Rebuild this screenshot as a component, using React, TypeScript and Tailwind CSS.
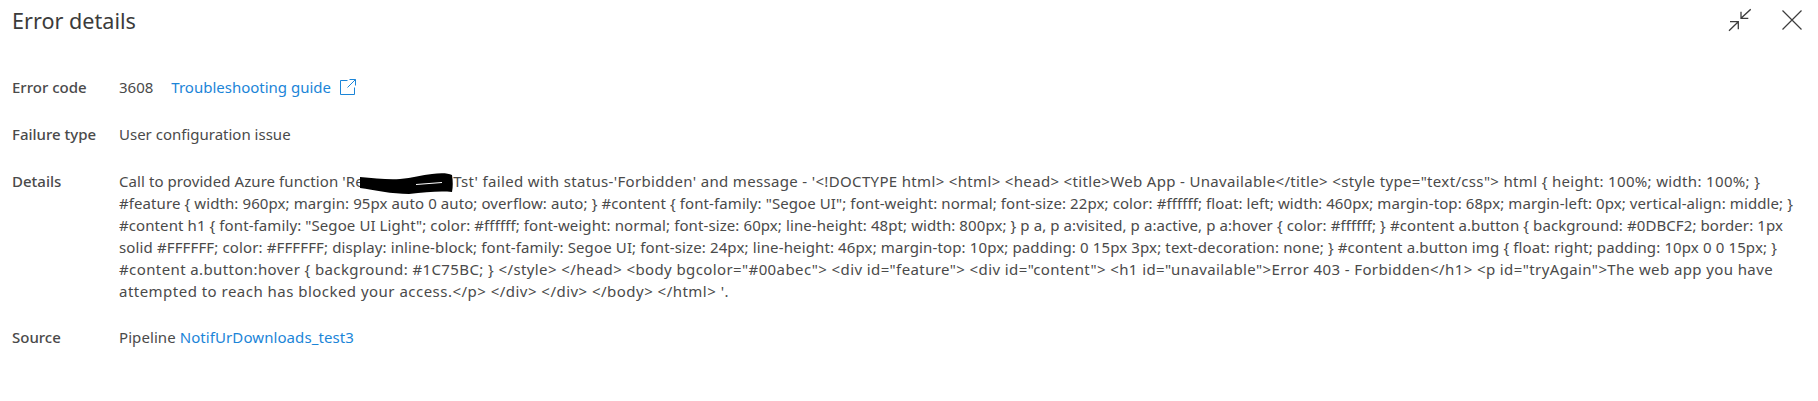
const font = 'font-["Noto_Sans","Open_Sans",sans-serif]';

function ExternalIcon() {
  return (
    <svg width="16" height="16" viewBox="0 0 16 16" fill="none" stroke="#1b85d8" strokeWidth="1" className="ml-[9px] shrink-0">
      <path d="M7.5 1.5H.5v14h14v-7" />
      <path d="M9.5.5h6v6M15.5.5 7.5 8.5" />
    </svg>
  );
}

function CollapseIcon() {
  return (
    <svg width="24" height="24" viewBox="0 0 24 24" fill="none" stroke="#3d3d3d" strokeWidth="1.3">
      <path d="M23.7 1.3 14 10.3M14 3.7v6.6h7.3" />
      <path d="M2 22.7l9.3-9M3 13.7h8.3v7.6" />
    </svg>
  );
}

function CloseIcon() {
  return (
    <svg width="20" height="20" viewBox="0 0 20 20" fill="none" stroke="#3d3d3d" strokeWidth="1.2" className="mt-[2px]">
      <path d="M.5.5l19 19M19.5.5l-19 19" />
    </svg>
  );
}

function Row({ label, className, children }: { label: string; className: string; children: React.ReactNode }) {
  return (
    <div className={`flex ${className}`}>
      <div className="w-[107px] shrink-0 font-medium text-[#4a4a4a]">{label}</div>
      <div className="min-w-0 flex-1 text-[#4a4a4a]">{children}</div>
    </div>
  );
}

// each line carries its own tracking, the original font has wider < > and digits
const detailLines = [
  {
    text: `#feature { width: 960px; margin: 95px auto 0 auto; overflow: auto; } #content { font-family: "Segoe UI"; font-weight: normal; font-size: 22px; color: #ffffff; float: left; width: 460px; margin-top: 68px; margin-left: 0px; vertical-align: middle; }`,
    className: 'tracking-[0.095px]',
  },
  {
    text: `#content h1 { font-family: "Segoe UI Light"; color: #ffffff; font-weight: normal; font-size: 60px; line-height: 48pt; width: 800px; } p a, p a:visited, p a:active, p a:hover { color: #ffffff; } #content a.button { background: #0DBCF2; border: 1px`,
    className: 'tracking-[0.094px]',
  },
  {
    text: `solid #FFFFFF; color: #FFFFFF; display: inline-block; font-family: Segoe UI; font-size: 24px; line-height: 46px; margin-top: 10px; padding: 0 15px 3px; text-decoration: none; } #content a.button img { float: right; padding: 10px 0 0 15px; }`,
    className: 'tracking-[0.131px]',
  },
  {
    text: `#content a.button:hover { background: #1C75BC; } </style> </head> <body bgcolor="#00abec"> <div id="feature"> <div id="content"> <h1 id="unavailable">Error 403 - Forbidden</h1> <p id="tryAgain">The web app you have`,
    className: 'tracking-[0.396px]',
  },
  {
    text: `attempted to reach has blocked your access.</p> </div> </div> </body> </html> '.`,
    className: 'tracking-[0.475px]',
  },
];

export default function App() {
  return (
    <div className={`h-[401px] w-[1818px] overflow-hidden bg-white text-[15px] leading-[22px] ${font}`}>
      <div className="flex items-start justify-between pl-3 pr-[16px] pt-[6px]">
        <h1 className="text-[21.6px] font-normal leading-[30px] text-[#3b3b3b]">Error details</h1>
        <div className="flex items-start gap-[31px] pt-[2px]">
          <CollapseIcon />
          <CloseIcon />
        </div>
      </div>

      <div className="px-3 pt-[40px]">
        <Row label="Error code" className="h-[47px]">
          <div className="flex items-center">
            <span>3608</span>
            <a className="ml-[18px] text-[#1b85d8]">Troubleshooting guide</a>
            <ExternalIcon />
          </div>
        </Row>
        <Row label="Failure type" className="h-[47px]">User configuration issue</Row>
        <Row label="Details" className="h-[156px]">
          <div className="whitespace-nowrap">
            <div>
              <span className="tracking-[0.08px]">Call to provided Azure function 'Re</span>
              <span className="relative inline-block w-[89.5px]">
                <svg width="93" height="23" viewBox="0 0 93 23" className="absolute -top-[15px] -left-[3.5px]">
                  <path d="M0 5C14 6 28 8 40 7 52 6 62 3 72 2 80 1 88 1 92 3 93 9 93 15 92 20 80 19 66 20 49 22 32 22 14 18 0 16Z" fill="#000" />
                  <path d="M56 12.5 82 10.5" stroke="#fff" strokeWidth="1" />
                </svg>
              </span>
              <span className="tracking-[0.337px]">
                {`Tst' failed with status-'Forbidden' and message - '<!DOCTYPE html> <html> <head> <title>Web App - Unavailable</title> <style type="text/css"> html { height: 100%; width: 100%; }`}
              </span>
            </div>
            {detailLines.map(line => (
              <div key={line.text} className={line.className}>{line.text}</div>
            ))}
          </div>
        </Row>
        <Row label="Source" className="h-[30px]">
          <span className="tracking-[0.08px]">
            Pipeline <a className="text-[#1b85d8]">NotifUrDownloads_test3</a>
          </span>
        </Row>
      </div>
    </div>
  );
}
